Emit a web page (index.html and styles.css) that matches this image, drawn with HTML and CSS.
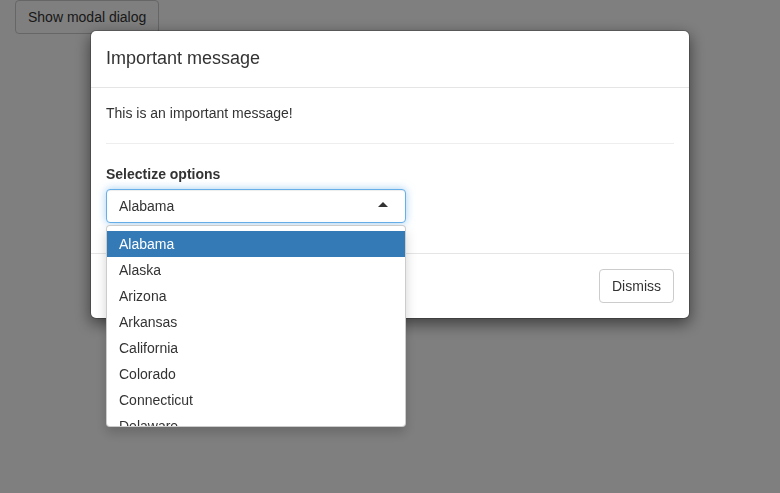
FILE: index.html
```html
<!DOCTYPE html>
<html>
<head>
<meta charset="utf-8">
<link rel="stylesheet" href="styles.css">
</head>
<body>
<div class="page">
  <button class="btn">Show modal dialog</button>
</div>
<div class="backdrop"></div>
<div class="modal">
  <div class="modal-dialog">
    <div class="modal-content">
      <div class="modal-header"><h4 class="modal-title">Important message</h4></div>
      <div class="modal-body">
        <p class="msg">This is an important message!</p>
        <hr class="rule">
        <div class="form-group">
          <label class="label">Selectize options</label>
          <div class="selectize">
            <div class="selectize-input">Alabama</div>
            <div class="dropdown">
              <div class="dropdown-content">
                <div class="option active">Alabama</div>
                <div class="option">Alaska</div>
                <div class="option">Arizona</div>
                <div class="option">Arkansas</div>
                <div class="option">California</div>
                <div class="option">Colorado</div>
                <div class="option">Connecticut</div>
                <div class="option">Delaware</div>
                <div class="option">District of Columbia</div>
              </div>
            </div>
          </div>
        </div>
      </div>
      <div class="modal-footer"><button class="btn btn-white">Dismiss</button></div>
    </div>
  </div>
</div>
</body>
</html>
```
FILE: styles.css
```css
* { box-sizing: border-box; }
html, body { margin: 0; padding: 0; height: 100%; }
body {
  font-family: "Liberation Sans", Arial, Helvetica, sans-serif;
  font-size: 14px;
  line-height: 20px;
  color: #333;
  background: #fff;
  overflow: hidden;
}
.page { padding: 0 15px; }
.btn {
  display: inline-block;
  font-family: inherit;
  font-size: 14px;
  line-height: 20px;
  padding: 6px 12px;
  color: #333;
  background: #fff;
  border: 1px solid #ccc;
  border-radius: 4px;
  margin: 0;
}
.backdrop {
  position: fixed;
  inset: 0;
  background: rgba(0, 0, 0, 0.5);
}
.modal {
  position: fixed;
  inset: 0;
}
.modal-dialog {
  width: 600px;
  margin: 30px auto;
}
.modal-content {
  position: relative;
  background: #fff;
  border: 1px solid rgba(0, 0, 0, 0.2);
  border-radius: 6px;
  box-shadow: 0 5px 15px rgba(0, 0, 0, 0.5);
  background-clip: padding-box;
}
.modal-header {
  padding: 15px;
  border-bottom: 1px solid #e5e5e5;
}
.modal-title {
  margin: 0;
  font-size: 18px;
  font-weight: 500;
  line-height: 1.42857;
}
.modal-body { padding: 15px; }
.msg { margin: 0 0 10px; }
.rule {
  margin: 20px 0;
  border: 0;
  border-top: 1px solid #eee;
  height: 0;
}
.form-group { margin-bottom: 15px; }
.label {
  display: block;
  font-weight: bold;
  margin-bottom: 5px;
}
.selectize {
  position: relative;
  width: 300px;
}
.selectize-input {
  position: relative;
  height: 34px;
  padding: 6px 12px;
  border: 1px solid #66afe9;
  border-radius: 4px;
  background: #fff;
  box-shadow: inset 0 1px 1px rgba(0, 0, 0, 0.075), 0 0 8px rgba(102, 175, 233, 0.6);
}
.selectize-input::after {
  content: "";
  position: absolute;
  top: 50%;
  right: 17px;
  margin-top: -4px;
  width: 0;
  height: 0;
  border-style: solid;
  border-width: 0 5px 5px 5px;
  border-color: transparent transparent #333 transparent;
}
.dropdown {
  position: absolute;
  top: 36px;
  left: 0;
  width: 300px;
  z-index: 10;
  background: #fff;
  border: 1px solid rgba(0, 0, 0, 0.2);
  border-radius: 4px;
  box-shadow: 0 6px 12px rgba(0, 0, 0, 0.175);
}
.dropdown-content {
  max-height: 200px;
  overflow: hidden;
  padding: 5px 0;
}
.option {
  padding: 3px 12px;
  line-height: 20px;
  color: #333;
}
.option.active {
  background: #337ab7;
  color: #fff;
}
.modal-footer {
  padding: 15px;
  text-align: right;
  border-top: 1px solid #e5e5e5;
}
```
